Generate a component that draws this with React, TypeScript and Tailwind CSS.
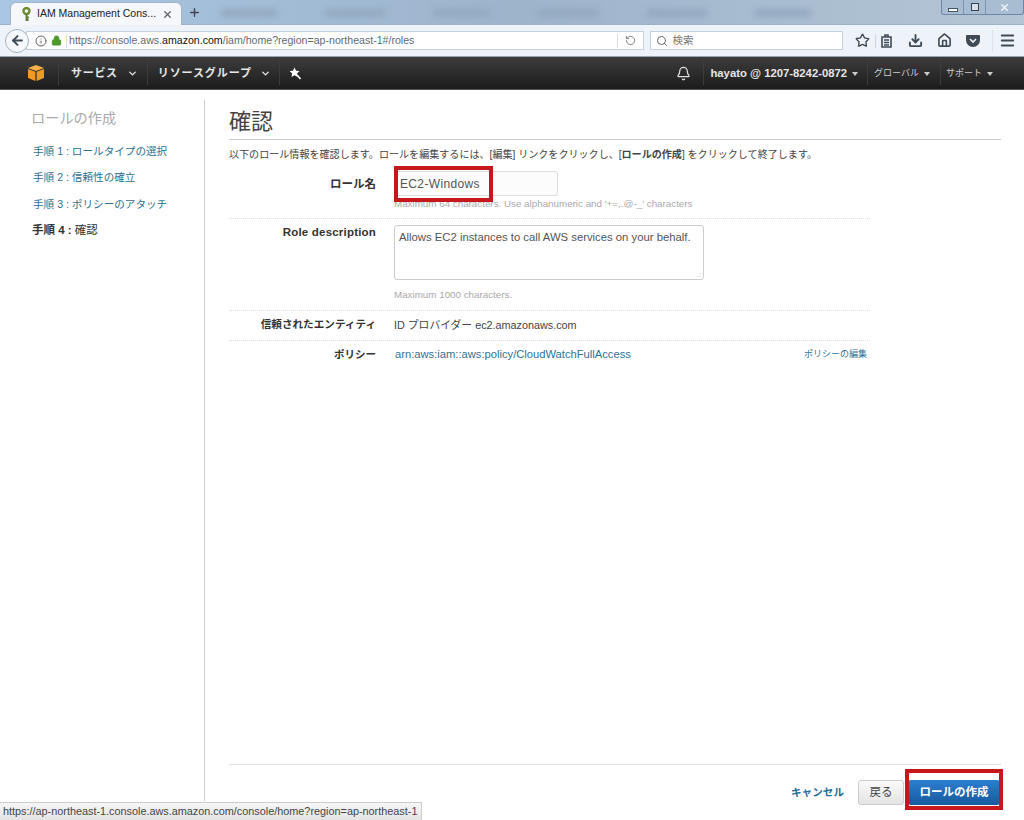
import { ChevronDown, Search, Star, Download, Home, Menu, Bell, RotateCw, Info, Lock, ArrowLeft, X, Plus } from "lucide-react";

const FONT = "font-['Liberation_Sans','Noto_Sans_CJK_JP',sans-serif]";

const STEPS = ["手順 1 : ロールタイプの選択", "手順 2 : 信頼性の確立", "手順 3 : ポリシーのアタッチ"];

function Caret() {
  return <span className="ml-1 inline-block h-0 w-0 border-x-[3px] border-t-[4px] border-x-transparent border-t-[#ccc] align-middle" />;
}

function NavDivider({ className = "" }: { className?: string }) {
  return <div className={`h-[24px] w-px bg-[#3c3c3c] ${className}`} />;
}

function TabStrip() {
  return (
    <div className="relative flex h-[25px] items-end border-b border-[#9fb1c6] bg-gradient-to-r from-[#a9c6e4] via-[#9db4cb] to-[#b4c5d5]">
      <div className="mb-[-1px] ml-[10px] flex h-[23px] w-[172px] items-center rounded-t-[6px] border border-b-0 border-[#a5b5c6] bg-[#f5f7fa] pl-[11px] pr-[8px]">
        <svg width="9" height="15" viewBox="0 0 9 15" className="shrink-0">
          <circle cx="4.5" cy="4" r="3" fill="none" stroke="#6d8a2f" strokeWidth="2.4" />
          <path d="M4.5 7v7M4.5 10.5h2.5M4.5 13h2" stroke="#5b7a2e" strokeWidth="1.8" fill="none" />
        </svg>
        <span className="flex-1 whitespace-nowrap pl-[6px] text-[10.5px] text-[#222]">IAM Management Cons...</span>
        <X size={11} className="shrink-0 text-[#666]" strokeWidth={3} />
      </div>
      <Plus size={13} className="mb-[5px] ml-[6px] text-[#445]" strokeWidth={2.6} />
      <div className="ml-[20px] mb-[7px] flex gap-[48px] blur-[3px]">
        <div className="h-[8px] w-[56px] bg-[#93a9c0]" />
        <div className="h-[8px] w-[60px] bg-[#93a9c0]" />
        <div className="h-[8px] w-[56px] bg-[#93a9c0]" />
        <div className="h-[8px] w-[62px] bg-[#93a9c0]" />
        <div className="h-[8px] w-[60px] bg-[#93a9c0]" />
        <div className="h-[8px] w-[56px] bg-[#93a9c0]" />
      </div>
      {/* window controls */}
      <div className="absolute right-[0px] top-0 flex h-[15px] w-[83px] overflow-hidden rounded-b-[3px] border border-t-0 border-[#6f87a3] bg-[#a9bdd2]">
        <div className="flex w-[22px] items-end justify-center border-r border-[#7f95ad] pb-[3px]"><div className="h-[2px] w-[8px] bg-[#fff] outline outline-1 outline-[#456]" /></div>
        <div className="flex w-[22px] items-center justify-center border-r border-[#7f95ad]"><div className="h-[8px] w-[8px] border border-[#345] bg-[#d5e0ea]" /></div>
        <div className="flex flex-1 items-center justify-center"><X size={11} className="text-[#f4f6f8]" strokeWidth={3} /></div>
      </div>
    </div>
  );
}

function Toolbar() {
  return (
    <div className="flex h-[32px] items-center border-b border-[#9aa3ad] bg-[#eef3f9] pl-[5px] pr-[8px]">
      <div className="z-10 flex h-[24px] w-[24px] shrink-0 items-center justify-center rounded-full border border-[#a4b3c4] bg-[#f5f8fb]">
        <ArrowLeft size={15} className="text-[#3f4b58]" strokeWidth={3.2} />
      </div>
      <div className="-ml-[3px] flex h-[19px] w-[623px] items-center border border-[#c2d0df] bg-white pl-[8px]">
        <Info size={12} className="text-[#666]" />
        <Lock size={11} className="ml-[4px] text-[#4d9a2a]" fill="#4d9a2a" />
        <div className="ml-[4px] h-[14px] w-px bg-[#ddd]" />
        <span className="ml-[2px] flex-1 text-[10.6px] text-[#5f6b76]">https://console.aws.<span className="text-[#111]">amazon.com</span>/iam/home?region=ap-northeast-1#/roles</span>
        <div className="h-[14px] w-px bg-[#ddd]" />
        <RotateCw size={11} className="mx-[7px] -scale-x-100 text-[#777]" />
      </div>
      <div className="ml-[6px] flex h-[19px] w-[194px] items-center border border-[#c2d0df] bg-white pl-[5px]">
        <Search size={12} className="text-[#666]" />
        <span className="ml-[4px] text-[10.5px] text-[#777]">検索</span>
      </div>
      <div className="ml-[12px] flex flex-1 items-center text-[#3f4a55]">
        <Star size={15} strokeWidth={2.2} />
        <div className="ml-[5px] h-[14px] w-px bg-[#cdd5dd]" />
        <svg width="13" height="14" viewBox="0 0 13 14" className="ml-[4px]" fill="none" stroke="currentColor" strokeWidth="1.6">
          <path d="M2 3h9v10H2zM4 6h5M4 8.5h5M4 11h5M5 3V1h3v2" />
        </svg>
        <Download size={15} strokeWidth={3} className="ml-[15px]" />
        <Home size={15} strokeWidth={2.6} className="ml-[14px]" />
        <svg width="14" height="13" viewBox="0 0 14 13" className="ml-[14px]">
          <path d="M1 1h12a1 1 0 0 1 1 1v4a7 7 0 0 1-14 0V2a1 1 0 0 1 1-1z" fill="currentColor" />
          <path d="M4 5l3 3 3-3" fill="none" stroke="#eef3f9" strokeWidth="1.6" />
        </svg>
        <div className="ml-[12px] h-[22px] w-px bg-[#dde3ea]" />
        <Menu size={17} strokeWidth={2.8} className="ml-[6px]" />
      </div>
    </div>
  );
}

function AwsNav() {
  return (
    <div className="flex h-[33px] items-center border-b border-[#555] bg-gradient-to-b from-[#3d3d3d] to-[#1c1c1c] text-[#e6e6e6]">
      <svg width="18" height="18" viewBox="0 0 18 18" className="ml-[27px]">
        <path d="M9 1l8 3-8 3-8-3z" fill="#f6b04a" />
        <path d="M1 5l7.4 2.8V17L1 14z" fill="#ee9a23" />
        <path d="M17 5l-7.4 2.8V17L17 14z" fill="#ee9a23" />
      </svg>
      <NavDivider className="ml-[13px]" />
      <span className="ml-[12px] pt-[1px] text-[11px] font-bold tracking-[0.7px]">サービス</span>
      <ChevronDown size={11} strokeWidth={3} className="ml-[9px]" />
      <NavDivider className="ml-[9px]" />
      <span className="ml-[10px] pt-[1px] text-[11px] font-bold tracking-[0.9px]">リソースグループ</span>
      <ChevronDown size={11} strokeWidth={3} className="ml-[8px]" />
      <NavDivider className="ml-[8px]" />
      <svg width="13" height="13" viewBox="0 0 13 13" className="ml-[9px]">
        <path d="M5.5 0.5l1.6 3.2 3.4.4-2.5 2.4.7 3.4-3.2-1.7-3 1.7.6-3.4L.6 4.1 4 3.7z" fill="white" />
        <path d="M8 8l3.5 4" stroke="white" strokeWidth="1.6" />
      </svg>
      <div className="flex-1" />
      <Bell size={15} className="text-[#ddd]" />
      <NavDivider className="ml-[12px]" />
      <span className="ml-[6px] pt-[1px] text-[11.3px] font-bold">hayato @ 1207-8242-0872</span>
      <span className="ml-[1px]"><Caret /></span>
      <NavDivider className="ml-[9px]" />
      <span className="ml-[6px] pt-[1px] text-[9px] text-[#ccc]">グローバル</span>
      <span className="ml-[1px]"><Caret /></span>
      <NavDivider className="ml-[10px]" />
      <span className="ml-[5px] pt-[1px] text-[9px] text-[#ccc]">サポート</span>
      <span className="mr-[31px] ml-[1px]"><Caret /></span>
    </div>
  );
}

function Sidebar() {
  return (
    <div className="mb-[19px] mt-[10px] w-[205px] shrink-0 border-r border-[#ccc] pl-[31px]">
      <div className="mt-[7px] text-[14.2px] leading-[22px] text-[#aaa]">ロールの作成</div>
      <div className="mt-[12.5px] flex flex-col gap-[8.5px]">
        {STEPS.map((s) => (
          <div key={s} className="pl-[2px] text-[10.6px] leading-[18px] text-[#2f6f8f]">{s}</div>
        ))}
        <div className="pl-[1px] text-[11.5px] leading-[18px] text-[#333]"><span className="font-bold">手順 4 :</span> 確認</div>
      </div>
    </div>
  );
}

function Row({ label, className = "", labelClass = "", children }: { label: string; className?: string; labelClass?: string; children: React.ReactNode }) {
  return (
    <div className={`flex border-b border-dotted border-[#ddd] ${className}`}>
      <div className={`w-[147px] shrink-0 text-right font-bold leading-[16px] text-[#333] ${labelClass}`}>{label}</div>
      <div className="ml-[18px] flex-1">{children}</div>
    </div>
  );
}

function Main() {
  return (
    <div className="ml-[24px] mr-[23px] flex flex-1 flex-col">
      <h1 className="mt-[17px] border-b border-[#ccc] pb-[2px] text-[22px] leading-[30px] text-[#444]">確認</h1>
      <p className="mt-[8px] text-[10.07px] leading-[14px] text-[#444]">
        以下のロール情報を確認します。ロールを編集するには、[編集] リンクをクリックし、[<span className="font-bold">ロールの作成</span>] をクリックして終了します。
      </p>
      <div className="w-[641px]">
        <Row label="ロール名" className="h-[57px] pt-[9px]" labelClass="mt-[5px] text-[11.5px]">
          <div className="flex h-[25px] w-[164px] items-center rounded-[3px] border border-[#ddd] bg-[#fcfcfc] pl-[5px] text-[12px] tracking-[0.35px] text-[#555]">EC2-Windows</div>
          <div className="mt-[1px] text-[9.8px] leading-[14px] text-[#aaa]">Maximum 64 characters. Use alphanumeric and '+=,.@-_' characters</div>
        </Row>
        <Row label="Role description" className="h-[92px] pt-[6px]" labelClass="-mt-[1px] text-[11.5px] tracking-[0.2px]">
          <div className="relative h-[55px] w-[310px] rounded-[3px] border border-[#ccc] pl-[4px] pt-[4px] text-[11.3px] leading-[14px] text-[#555]">
            Allows EC2 instances to call AWS services on your behalf.
            <span className="absolute bottom-[1px] right-[2px] text-[7px] leading-[7px] text-[#aaa]">.:</span>
          </div>
          <div className="mt-[8px] text-[9.8px] leading-[14px] text-[#aaa]">Maximum 1000 characters.</div>
        </Row>
        <Row label="信頼されたエンティティ" className="h-[30px] items-center pb-[3px]" labelClass="text-[10.6px]">
          <span className="text-[10.8px] text-[#444]">ID プロバイダー ec2.amazonaws.com</span>
        </Row>
        <div className="flex pt-[5px]">
          <div className="w-[147px] shrink-0 text-right text-[10.5px] font-bold leading-[16px] text-[#333]">ポリシー</div>
          <div className="ml-[19px] flex flex-1 items-center justify-between pr-[3px]">
            <span className="text-[11.2px] leading-[16px] text-[#2f7396]">arn:aws:iam::aws:policy/CloudWatchFullAccess</span>
            <span className="text-[9px] leading-[16px] text-[#2f7396]">ポリシーの編集</span>
          </div>
        </div>
      </div>
      <div className="flex-1" />
      <div className="mb-[15px] flex items-center justify-end border-t border-[#ddd] pt-[15px]">
        <span className="text-[10.6px] font-bold text-[#1f6c99]">キャンセル</span>
        <button className="ml-[14px] h-[25px] w-[46px] rounded-[3px] border border-[#ccc] bg-gradient-to-b from-[#fafafa] to-[#e4e4e4] text-[11.5px] text-[#444]">戻る</button>
        <button className="ml-[4px] mr-[1px] h-[25px] w-[92px] rounded-[3px] bg-gradient-to-b from-[#2d7ed0] to-[#175a9f] text-[11.5px] font-bold text-white">ロールの作成</button>
      </div>
    </div>
  );
}

export default function App() {
  return (
    <div className={`relative flex h-[820px] w-[1024px] flex-col overflow-hidden bg-white ${FONT}`}>
      <TabStrip />
      <Toolbar />
      <AwsNav />
      <div className="flex flex-1">
        <Sidebar />
        <Main />
      </div>
      {/* annotation boxes */}
      <div className="absolute left-[394px] top-[166px] h-[36px] w-[99px] border-[4px] border-[#c8161d]" />
      <div className="absolute left-[905px] top-[769px] h-[41px] w-[98px] border-[4px] border-[#c8161d]" />
      {/* status link tooltip */}
      <div className="absolute bottom-0 left-0 flex h-[18px] w-[422px] items-center border-r border-t border-[#ccc] bg-gradient-to-b from-[#f6f6f6] to-[#e4e4e4] pl-[3px] text-[10.85px] text-[#444]">
        https://ap-northeast-1.console.aws.amazon.com/console/home?region=ap-northeast-1
      </div>
    </div>
  );
}
